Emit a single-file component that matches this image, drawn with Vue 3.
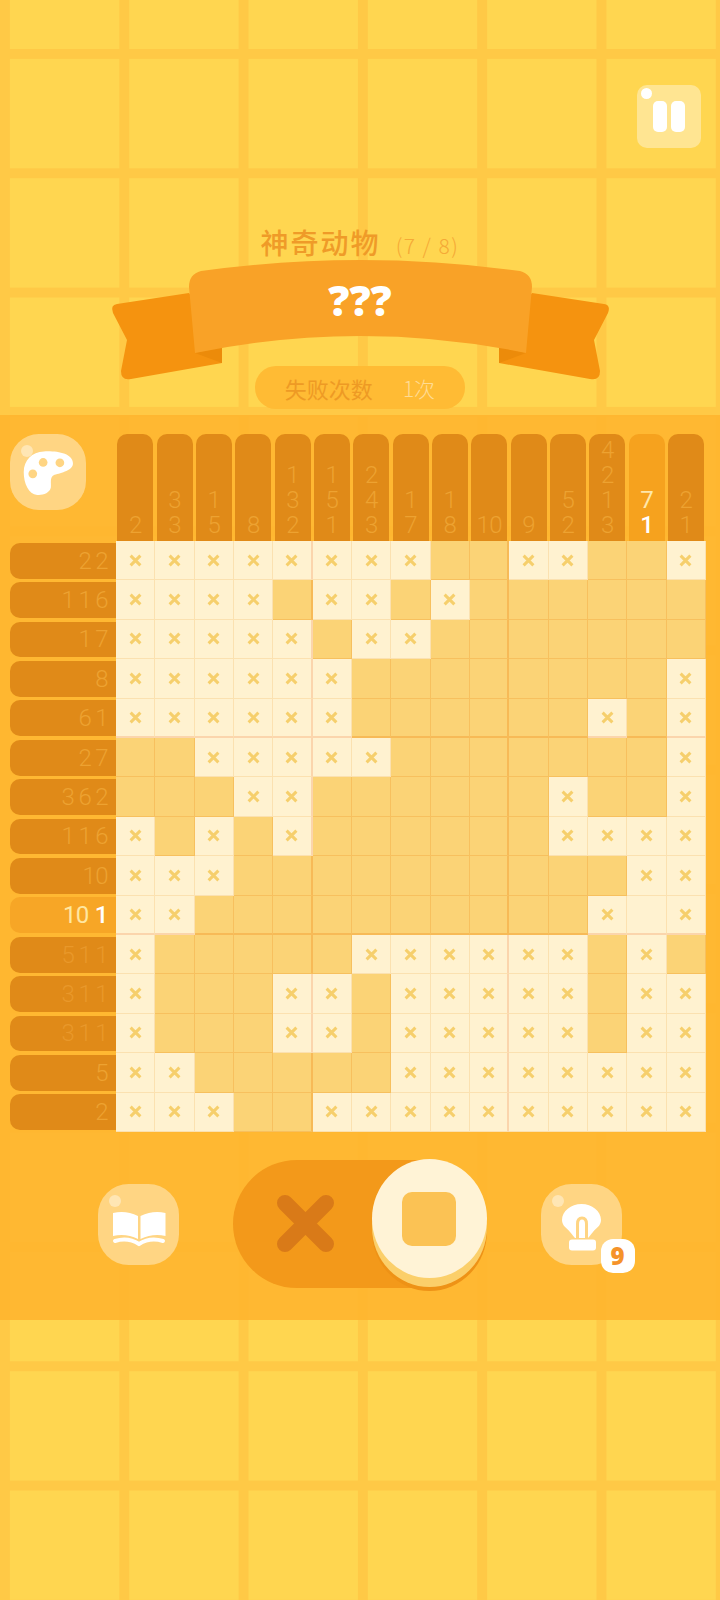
<template>
  <div class="page">
    <div class="header">
      <div class="pause">
        <i class="dot"></i>
        <b></b><b></b>
      </div>
      <div class="title">
        <span class="name">神奇动物</span>
        <span class="progress">(7 / 8)</span>
      </div>
      <div class="ribbon">
        <svg viewBox="0 257 720 125" width="720" height="125">
          <path fill="#f5930f" d="M189 293 L117 304 Q110 305 113 313 L127 340 L121 371 Q121 381 131 379 L222 363 V340 Z" />
          <path fill="#f5930f" d="M532 293 L604 304 Q611 305 608 313 L594 340 L600 371 Q600 381 590 379 L499 363 V340 Z" />
          <path fill="#ec8b0a" d="M195 353 L222 347 V363 Z" />
          <path fill="#ec8b0a" d="M526 353 L499 347 V363 Z" />
          <path fill="#f9a227" d="M189 287 Q189 274 201 271 Q360.5 249 520 271 Q532 274 532 287 L526 353 Q360.5 319 195 353 Z" />
        </svg>
        <span class="secret">???</span>
      </div>
      <div class="fails">
        <span>失败次数</span>
        <span class="count">1次</span>
      </div>
    </div>

    <div class="panel">
      <div class="top">
        <div class="palette">
          <i class="dot"></i>
          <svg viewBox="29 58 227 227" width="76" height="76">
            <path fill="#fff" d="M130 110 C170 108 216 116 217 145 C218 167 182 173 162 180 C146 187 153 205 151 218 C148 235 125 242 110 240 C85 238 70 205 70 172 C70 135 95 112 130 110 Z" />
            <circle cx="128" cy="143" r="13" fill="#ffd583" />
            <circle cx="178" cy="144" r="13" fill="#ffd583" />
            <circle cx="97" cy="177" r="13" fill="#ffd583" />
          </svg>
        </div>
        <div class="cols">
          <div v-for="(col, c) in colClues" :key="c" class="col" :class="{ active: c === 13 }">
            <span v-for="(n, i) in col" :key="i" :class="{ done: c === 13 && i === 1 }">{{ n }}</span>
          </div>
        </div>
      </div>

      <div class="rows">
        <div class="row-clues">
          <div v-for="(row, r) in rowClues" :key="r" class="row-clue" :class="{ active: r === 9, dim: r > 9 && r < 13 }">
            <span v-for="(n, i) in row" :key="i" :class="{ done: r === 9 && i === 1 }">{{ n }}</span>
          </div>
        </div>
        <div class="grid">
          <template v-for="(line, r) in cells" :key="r">
            <div
              v-for="(ch, c) in line"
              :key="c"
              class="cell"
              :class="{
                filled: ch === '.',
                light: ch !== '.',
                vfive: c === 4 || c === 9,
                hfive: r === 4 || r === 9
              }"
            >
              <svg v-if="ch === 'x'" viewBox="0 0 13 13" width="13" height="13">
                <path d="M1.6 1.6 L11.4 11.4 M11.4 1.6 L1.6 11.4" stroke="#f6cf6c" stroke-width="3" />
              </svg>
            </div>
          </template>
        </div>
      </div>

      <div class="controls">
        <div class="round-btn">
          <i class="dot"></i>
          <svg viewBox="0 0 81 81" width="81" height="81">
            <path fill="#fff" d="M15 29 Q28 26 40 32 V55 Q28 49 15 52 Z" />
            <path fill="#fff" d="M42.5 32 Q55 26 67.5 29 V52 Q55 49 42.5 55 Z" />
            <path fill="none" stroke="#fff" stroke-width="4" stroke-linecap="round" d="M17 57 Q30 53 41 60 Q52 53 65 57" />
          </svg>
        </div>
        <div class="toggle">
          <svg class="cross" viewBox="0 0 57 57" width="57" height="57">
            <path d="M8 8 L49 49 M49 8 L8 49" stroke="#d97a18" stroke-width="16" stroke-linecap="round" />
          </svg>
          <div class="knob"><div class="square"></div></div>
        </div>
        <div class="round-btn bulb">
          <i class="dot"></i>
          <svg viewBox="0 0 81 81" width="81" height="81">
            <path fill="#fff" d="M40.5 20 C30 20 21 27 21 36 C21 42 26 44 29 48 C31 50 33 53 34 54 H47 C48 53 50 50 52 48 C55 44 60 42 60 36 C60 27 51 20 40.5 20 Z" />
            <path fill="none" stroke="#ffd583" stroke-width="3" d="M36.5 54 V40 Q36.5 34 41 34 Q45.5 34 45.5 40 V54" />
            <rect x="28" y="55.5" width="27" height="11" rx="3" fill="#fff" />
          </svg>
          <span class="badge">9</span>
        </div>
      </div>
    </div>
  </div>
</template>

<script setup>
const colClues = [
  [2], [3, 3], [1, 5], [8], [1, 3, 2], [1, 5, 1], [2, 4, 3], [1, 7],
  [1, 8], [10], [9], [5, 2], [4, 2, 1, 3], [7, 1], [2, 1]
]

const rowClues = [
  [2, 2], [1, 1, 6], [1, 7], [8], [6, 1], [2, 7], [3, 6, 2], [1, 1, 6],
  [10], [10, 1], [5, 1, 1], [3, 1, 1], [3, 1, 1], [5], [2]
]

// x = crossed out, o = cleared without a mark, . = still open
const cells = [
  'xxxxxxxx..xx..x',
  'xxxx.xx.x......',
  'xxxxx.xx.......',
  'xxxxxx........x',
  'xxxxxx......x.x',
  '..xxxxx.......x',
  '...xx......x..x',
  'x.x.x......xxxx',
  'xxx..........xx',
  'xx..........xox',
  'x.....xxxxxx.x.',
  'x...xx.xxxxx.xx',
  'x...xx.xxxxx.xx',
  'xx.....xxxxxxxx',
  'xxx..xxxxxxxxxx'
]
</script>

<style scoped>
.page {
  width: 720px;
  height: 1600px;
  overflow: hidden;
  background-color: #ffd650;
  background-image:
    linear-gradient(90deg, #ffc946 10px, transparent 10px),
    linear-gradient(#ffc946 10px, transparent 10px);
  background-size: 119.3px 119.3px;
  background-position: 0 49px;
  font-family: Roboto, "Noto Sans CJK SC", sans-serif;
}

.header {
  height: 415px;
  box-sizing: border-box;
  padding-top: 85px;
  display: flex;
  flex-direction: column;
  align-items: center;
}

.dot {
  position: absolute;
  width: 12px;
  height: 12px;
  border-radius: 50%;
  background: rgba(255, 255, 255, 0.4);
}

.pause {
  position: relative;
  align-self: flex-end;
  margin-right: 19px;
  width: 64px;
  height: 63px;
  border-radius: 10px;
  background: rgba(255, 255, 255, 0.38);
  display: flex;
  justify-content: center;
  align-items: center;
  gap: 4px;
}

.pause .dot {
  left: 4px;
  top: 3px;
  width: 11px;
  height: 11px;
  background: #fff;
}

.pause b {
  width: 14px;
  height: 31px;
  border-radius: 5px;
  background: #fff;
}

.title {
  margin-top: 79px;
  height: 30px;
  line-height: 30px;
  display: flex;
  align-items: baseline;
  gap: 15px;
  font-family: "Noto Sans CJK SC", sans-serif;
  color: #ef9b28;
}

.name {
  font-size: 28px;
  font-weight: 500;
  letter-spacing: 2px;
}

.progress {
  font-size: 21px;
  font-weight: 300;
  letter-spacing: 1.5px;
  color: #f5a936;
}

.ribbon {
  position: relative;
  width: 720px;
  height: 109px;
}

.ribbon svg {
  position: absolute;
  left: 0;
  top: 0;
}

.secret {
  position: absolute;
  left: 0;
  right: 0;
  top: 18px;
  text-align: center;
  font-family: "Open Sans", sans-serif;
  font-size: 42px;
  line-height: 50px;
  font-weight: 800;
  color: #fff;
}

.fails {
  width: 210px;
  height: 43px;
  border-radius: 21px;
  background: #ffbb34;
  display: flex;
  justify-content: center;
  align-items: center;
  gap: 30px;
  font-family: "Noto Sans CJK SC", sans-serif;
  font-size: 22px;
  font-weight: 400;
  color: #ee9a24;
}

.count {
  color: #ffdc94;
  font-size: 21px;
  font-weight: 300;
}

.panel {
  padding: 19px 0 32px;
  background: rgba(255, 180, 45, 0.88);
}

.top {
  display: flex;
  align-items: flex-start;
}

.palette {
  position: relative;
  width: 76px;
  height: 76px;
  margin-left: 9.5px;
  margin-right: 30.5px;
  border-radius: 38%;
  background: #ffd583;
}

.palette .dot {
  left: 11px;
  top: 11px;
}

.palette svg {
  display: block;
}

.cols {
  width: 590px;
  display: grid;
  grid-template-columns: repeat(15, 1fr);
}

.col {
  height: 107px;
  margin: 0 1.9px 0 1.3px;
  box-sizing: border-box;
  padding-bottom: 3px;
  border-radius: 10px 10px 0 0;
  background: #e08a18;
  color: #eda231;
  font-size: 24px;
  font-weight: 300;
  line-height: 25px;
  display: flex;
  flex-direction: column;
  justify-content: flex-end;
  align-items: center;
}

.col.active {
  background: #f6a21e;
  color: #ffe7aa;
  font-weight: 400;
}

.done {
  color: #fff;
  font-weight: 500;
}

.rows {
  display: flex;
}

.row-clues {
  width: 116px;
  height: 591px;
  box-sizing: border-box;
  padding-left: 9.5px;
  display: grid;
  grid-template-rows: repeat(15, 1fr);
}

.row-clue {
  margin: 1.8px 0 1.9px;
  box-sizing: border-box;
  padding-right: 8px;
  border-radius: 10px 0 0 10px;
  background: #e08a18;
  color: #eda231;
  font-size: 24px;
  font-weight: 300;
  display: flex;
  justify-content: flex-end;
  align-items: center;
  gap: 4px;
}

.row-clue.dim {
  color: #e9982a;
}

.row-clue.active {
  background: #f7a626;
  color: #ffe7a0;
  font-weight: 400;
  gap: 6px;
}

.col span,
.row-clue span {
  letter-spacing: -0.5px;
}

.grid {
  width: 590px;
  height: 591px;
  display: grid;
  grid-template-columns: repeat(15, 1fr);
  grid-template-rows: repeat(15, 1fr);
}

.cell {
  box-sizing: border-box;
  border-right: 1px solid transparent;
  border-bottom: 1px solid transparent;
  display: flex;
  justify-content: center;
  align-items: center;
}

.cell.light {
  background: #fff2d0;
  border-color: rgba(240, 175, 80, 0.25);
}

.cell.filled {
  background: #fbd376;
  border-color: rgba(240, 150, 40, 0.3);
}

.cell.light.vfive {
  border-right: 2px solid rgba(245, 150, 90, 0.3);
}

.cell.light.hfive {
  border-bottom: 2px solid rgba(245, 150, 90, 0.3);
}

.cell.filled.vfive {
  border-right: 2px solid rgba(240, 140, 30, 0.35);
}

.cell.filled.hfive {
  border-bottom: 2px solid rgba(240, 140, 30, 0.35);
}

.controls {
  margin-top: 28px;
  padding-left: 98px;
  display: flex;
  align-items: center;
}

.round-btn {
  position: relative;
  width: 81px;
  height: 81px;
  border-radius: 38%;
  background: #ffd583;
}

.round-btn .dot {
  left: 11px;
  top: 11px;
}

.round-btn svg {
  display: block;
}

.toggle {
  position: relative;
  width: 254px;
  height: 128px;
  margin: 0 54px 0 53.5px;
  border-radius: 64px;
  background: #f3991a;
}

.cross {
  position: absolute;
  left: 44px;
  top: 35px;
}

.knob {
  position: absolute;
  right: 0;
  top: -1px;
  width: 115px;
  height: 119px;
  border-radius: 50%;
  background: #fff3d6;
  box-shadow: 0 9px 0 #fbcf6a, 0 13px 0 #ee9216;
  display: flex;
  justify-content: center;
  align-items: center;
}

.square {
  width: 54px;
  height: 54px;
  border-radius: 10px;
  background: #fbc254;
}

.badge {
  position: absolute;
  left: 60px;
  top: 55px;
  width: 34px;
  height: 34px;
  border-radius: 12px;
  background: #fff;
  color: #f5932a;
  font-family: "Open Sans", sans-serif;
  font-size: 24px;
  font-weight: 800;
  line-height: 34px;
  text-align: center;
}
</style>
